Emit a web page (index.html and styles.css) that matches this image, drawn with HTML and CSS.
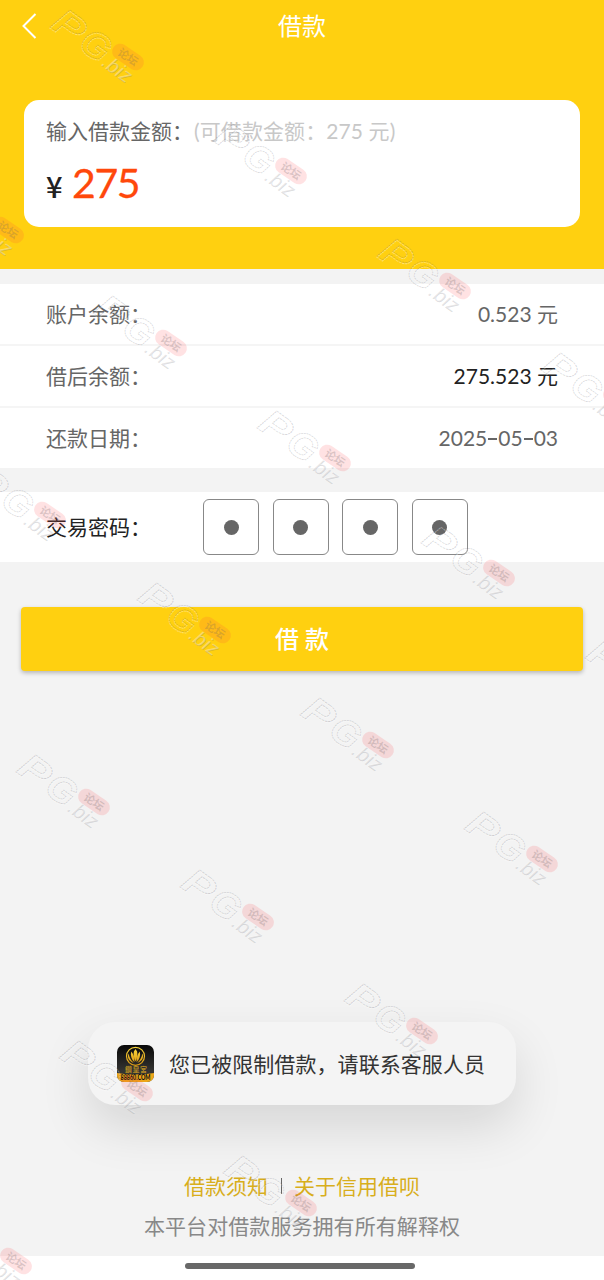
FILE: index.html
```html
<!DOCTYPE html>
<html lang="zh-CN">
<head>
<meta charset="utf-8">
<title>借款</title>
<link rel="stylesheet" href="styles.css">
</head>
<body>
<div class="screen">
  <header class="hero">
    <div class="nav">
      <svg class="back" width="16" height="28" viewBox="0 0 16 28"><path d="M14.500 2 2.500 14l12 12" fill="none" stroke="#fff" stroke-width="2"/></svg>
      <h1 class="title">借款</h1>
    </div>
    <section class="card">
      <div class="prompt">输入借款金额：<span class="hint">(可借款金额：275 元)</span></div>
      <div class="amount"><span class="yen">¥</span><span class="value">275</span></div>
    </section>
  </header>

  <section class="rows">
    <div class="row"><span>账户余额：</span><span>0.523 元</span></div>
    <div class="row"><span>借后余额：</span><span class="strong">275.523 元</span></div>
    <div class="row"><span>还款日期：</span><span class="date">2025<i class="dash"></i>05<i class="dash"></i>03</span></div>
  </section>

  <section class="password">
    <span class="label">交易密码：</span>
    <div class="cells"><span class="cell"></span><span class="cell"></span><span class="cell"></span><span class="cell"></span></div>
  </section>

  <button class="submit">借 款</button>

  <footer class="foot">
    <div class="links"><a>借款须知</a><span class="bar"></span><a>关于信用借呗</a></div>
    <div class="note">本平台对借款服务拥有所有解释权</div>
  </footer>
  <div class="gesture"><span class="pill"></span></div>

  <div class="toast">
    <svg class="logo" width="37" height="37" viewBox="0 0 37 37">
      <defs>
        <linearGradient id="ink" x1="0" y1="0" x2="0" y2="1"><stop offset="0" stop-color="#080808"/><stop offset=".7" stop-color="#343432"/></linearGradient>
        <linearGradient id="gold" x1="0" y1="0" x2="0" y2="1"><stop offset="0" stop-color="#f9d63b"/><stop offset="1" stop-color="#dc9a12"/></linearGradient>
        <clipPath id="tile"><rect width="37" height="37" rx="7"/></clipPath>
      </defs>
      <g clip-path="url(#tile)">
        <rect width="37" height="37" fill="url(#ink)"/>
        <path d="M0 28Q18.500 31 37 28V37H0Z" fill="#eda719"/>
      </g>
      <circle cx="18.500" cy="11.300" r="9" fill="none" stroke="url(#gold)" stroke-width="1.200"/>
      <path d="M18.500 4l1.600 2.600c.6 3 .2 6-1.600 10-1.800-4-2.200-7-1.600-10ZM14.200 6.500c-1 4 .2 8 3.300 10.800-.2-4-.6-8-3.300-10.800ZM22.800 6.500c1 4-.2 8-3.300 10.800.2-4 .6-8 3.300-10.800ZM11.700 8.500c-2 4 .3 8 5 9.300-3-2.800-4.500-5.500-5-9.300ZM25.300 8.500c2 4-.3 8-5 9.300 3-2.800 4.500-5.500 5-9.300Z" fill="url(#gold)"/>
      <text class="logo-name" x="8" y="27" textLength="22">鑽皇宮</text>
      <text class="logo-url" x="3.500" y="35" textLength="30" lengthAdjust="spacingAndGlyphs">88860.COM</text>
    </svg>
    <span>您已被限制借款，请联系客服人员</span>
  </div>

  <svg class="marks" width="604" height="1280" viewBox="0 0 604 1280" aria-hidden="true">
    <defs>
      <g id="mark">
        <g transform="translate(1 21) rotate(36)">
          <text class="mark-big mark-light" x="0" y="1" textLength="31" lengthAdjust="spacingAndGlyphs">P</text>
          <text class="mark-big" x="-1" y="0" textLength="31" lengthAdjust="spacingAndGlyphs">P</text>
          <text class="mark-big mark-light" x="34" y="1">G</text>
          <text class="mark-big" x="33" y="0">G</text>
          <text class="mark-small mark-shade" x="63.500" y="1.500" textLength="32">.biz</text>
          <text class="mark-small" x="63" y="1" textLength="32">.biz</text>
        </g>
        <g transform="translate(79 51) rotate(34)">
          <rect class="mark-pill" x="-17.500" y="-8" width="35" height="16" rx="8"/>
          <text class="mark-tag" x="-11" y="4">论坛</text>
        </g>
      </g>
    </defs>
    <use href="#mark" x="49" y="6"/>
    <use href="#mark" x="212" y="120"/>
    <use href="#mark" x="-71" y="179"/>
    <use href="#mark" x="376" y="235"/>
    <use href="#mark" x="92" y="292"/>
    <use href="#mark" x="540" y="349"/>
    <use href="#mark" x="256" y="407"/>
    <use href="#mark" x="-29" y="464"/>
    <use href="#mark" x="420" y="522"/>
    <use href="#mark" x="136" y="579"/>
    <use href="#mark" x="584" y="637"/>
    <use href="#mark" x="299" y="694"/>
    <use href="#mark" x="15" y="751"/>
    <use href="#mark" x="463" y="808"/>
    <use href="#mark" x="179" y="866"/>
    <use href="#mark" x="343" y="980"/>
    <use href="#mark" x="58" y="1037"/>
    <use href="#mark" x="222" y="1152"/>
    <use href="#mark" x="-63" y="1210"/>
  </svg>
</div>
</body>
</html>
```
FILE: styles.css
```css
* { box-sizing: border-box; }

body {
  margin: 0;
  background: #f3f3f3;
  color: #666;
  font: 21px/30px Lato, "Noto Sans CJK SC", sans-serif;
}

.screen {
  position: relative;
  display: flex;
  flex-direction: column;
  width: 604px;
  height: 1280px;
  overflow: hidden;
}

.hero {
  height: 269px;
  padding: 0 24px;
  background: #ffd010;
}

.nav {
  display: grid;
  grid-template-columns: 60px 1fr 60px;
  align-items: center;
  height: 52px;
  margin: 0 -24px 48px;
}

.back { margin-left: 21px; }

.title {
  margin: 0;
  color: #fff;
  font-size: 24px;
  font-weight: 400;
  text-align: center;
}

.card {
  height: 127px;
  padding: 16px 22px;
  border-radius: 15px;
  background: #fff;
}

.prompt { white-space: nowrap; }

.hint {
  margin-left: 1px;
  color: #c8c8c8;
  letter-spacing: 0.1px;
}

.amount {
  display: flex;
  align-items: baseline;
  gap: 8px;
  margin-top: 11px;
  line-height: 52px;
}

.yen {
  width: 18px;
  color: #222;
  font-size: 29px;
  font-weight: 500;
  font-family: "Noto Sans CJK SC", sans-serif;
}

.value {
  color: #ff480b;
  font-size: 41px;
  letter-spacing: -1.400px;
  -webkit-text-stroke: 0.3px #ff480b;
}

.rows {
  margin-top: 15px;
  background: #fff;
}

.row {
  display: flex;
  justify-content: space-between;
  align-items: center;
  height: 62px;
  padding: 0 46px;
  border-bottom: 2px solid #f5f5f5;
}

.row:last-child {
  height: 60px;
  border-bottom: 0;
}

.strong { color: #222; }
.date { display: flex; align-items: center; }

.dash {
  width: 9px;
  height: 2px;
  margin: 1px 1px 0;
  background: #666;
}

.password {
  display: flex;
  align-items: center;
  height: 70px;
  margin-top: 24px;
  padding-left: 46px;
  background: #fff;
}

.label {
  width: 157px;
  color: #222;
}

.cells {
  display: flex;
  gap: 13.500px;
}

.cell {
  display: grid;
  place-items: center;
  width: 56px;
  height: 56px;
  border: 1.500px solid #888;
  border-radius: 6px;
}

.cell::after {
  width: 15px;
  height: 15px;
  border-radius: 50%;
  background: #666;
  content: "";
}

.submit {
  height: 64px;
  margin: 45px 21px 0;
  padding: 0;
  border: 0;
  border-radius: 4px;
  background: #ffd010;
  box-shadow: 0 2px 4px rgba(0, 0, 0, 0.25);
  color: #fff;
  font: 500 24px/64px Lato, "Noto Sans CJK SC", sans-serif;
}

.foot {
  margin-top: auto;
  padding-bottom: 15px;
  text-align: center;
}

.links {
  display: flex;
  justify-content: center;
  align-items: center;
  height: 30px;
  margin-bottom: 10px;
  color: #d8ae1c;
}

.bar {
  width: 1px;
  height: 16px;
  margin: 0 12px 0 13px;
  background: #666;
}

.note { color: #888; letter-spacing: 0.07px; }

.gesture {
  display: flex;
  justify-content: center;
  height: 24px;
  padding: 7px 4px 0 0;
  background: #fff;
}

.pill {
  width: 230px;
  height: 6px;
  border-radius: 3px;
  background: #686868;
}

.toast {
  position: absolute;
  top: 1022px;
  left: 88px;
  display: flex;
  align-items: center;
  gap: 15px;
  width: 428px;
  height: 83px;
  padding-left: 29px;
  border-radius: 27px;
  background: #f4f4f4;
  box-shadow: 0 22px 50px rgba(0, 0, 0, 0.12);
  color: #333;
  letter-spacing: 0.07px;
  white-space: nowrap;
}

.logo-name {
  fill: #b58b24;
  font: 700 7px "Noto Sans CJK SC", sans-serif;
  letter-spacing: 0;
}

.logo-url {
  fill: #111;
  font: 900 6.500px Lato, sans-serif;
  letter-spacing: 0;
}

.marks {
  position: absolute;
  inset: 0;
  pointer-events: none;
}

.mark-big {
  fill: none;
  stroke: rgba(100, 100, 110, 0.25);
  stroke-width: 0.8;
  stroke-dasharray: 2 0.7;
  font: italic 700 37px "Liberation Sans", sans-serif;
}

.mark-light { stroke: rgba(255, 255, 255, 0.4); }

.mark-small {
  fill: rgba(255, 255, 255, 0.35);
  font: italic 400 20px "Liberation Sans", sans-serif;
}

.mark-shade { fill: rgba(90, 90, 100, 0.22); }

.mark-pill { fill: rgba(255, 60, 65, 0.15); }

.mark-tag {
  fill: rgba(110, 100, 100, 0.25);
  font: 700 11px "Noto Sans CJK SC", sans-serif;
}
```
